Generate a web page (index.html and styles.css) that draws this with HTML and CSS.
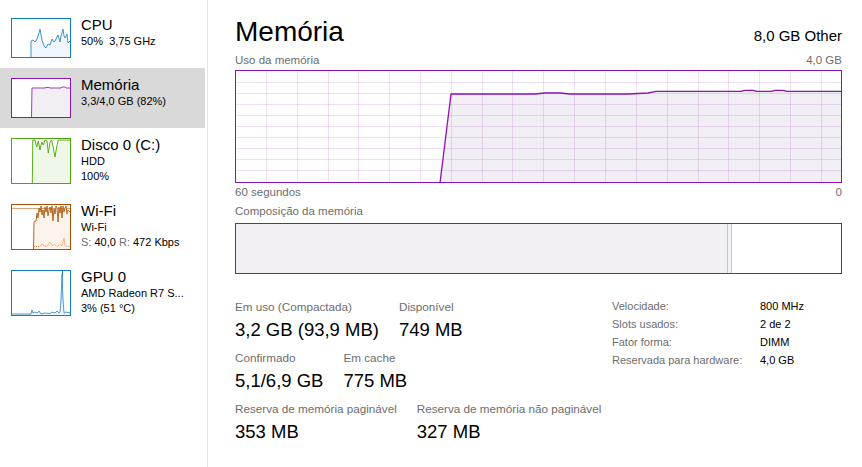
FILE: index.html
```html
<!DOCTYPE html>
<html lang="pt-BR"><head><meta charset="UTF-8">
<meta name="viewport" content="width=device-width, initial-scale=1">
<title>Gerenciador de Tarefas - Memória</title>
<link rel="stylesheet" href="styles.css"></head><body>

<div class="tm">
  <!-- lista de dispositivos -->
  <nav class="side">
    <div class="item">
      <svg class="thumb cpu" viewBox="12 19 58 38" preserveAspectRatio="none">
        <polygon class="fill" points="31,57 31,41 33,40 35,42 37,39 39,33 40,29 42,40 44,46 46,48 48,44 50,45 52,39 54,42 55,41 57,37 58,35 60,42 61,36 63,29 64,36 65,38 67,34 68,43 70,41 70,57"/>
        <polyline class="line" points="31,57 31,41 33,40 35,42 37,39 39,33 40,29 42,40 44,46 46,48 48,44 50,45 52,39 54,42 55,41 57,37 58,35 60,42 61,36 63,29 64,36 65,38 67,34 68,43 70,41"/>
      </svg>
      <div class="info"><div class="name">CPU</div><div class="sub">50%&nbsp; 3,75 GHz</div></div>
    </div>
    <div class="item active">
      <svg class="thumb mem" viewBox="12 79 58 38" preserveAspectRatio="none">
        <polygon class="fill" points="31.5,117 32,88 45,88 46,87.5 49,87.5 50,88 61,88 62,87 65,87 66,88 70,88 70,117"/>
        <polyline class="line" points="31.5,117 32,88 45,88 46,87.5 49,87.5 50,88 61,88 62,87 65,87 66,88 70,88"/>
      </svg>
      <div class="info"><div class="name">Memória</div><div class="sub">3,3/4,0 GB (82%)</div></div>
    </div>
    <div class="item tall">
      <svg class="thumb disk" viewBox="12 139 58 44" preserveAspectRatio="none">
        <polygon class="fill" points="32.3,183 32.8,140 35,140 36.7,147 38.3,141 40,150 41.7,142 43.3,145 45,140 47,141 48.3,153 50,142 51.7,140 53.3,148 55,157 56.7,147 58.3,140 70,140 70,183"/>
        <polyline class="line" points="32.3,183 32.8,140 35,140 36.7,147 38.3,141 40,150 41.7,142 43.3,145 45,140 47,141 48.3,153 50,142 51.7,140 53.3,148 55,157 56.7,147 58.3,140 70,140"/>
      </svg>
      <div class="info"><div class="name">Disco 0 (C:)</div><div class="sub">HDD</div><div class="sub">100%</div></div>
    </div>
    <div class="item tall">
      <svg class="thumb wifi" viewBox="12 205 58 44" preserveAspectRatio="none">
        <line class="scale" x1="12" y1="208.5" x2="70" y2="208.5"/>
        <polygon class="fill" points="33.5,249 34,222 36,221 37,213 38,218 39,208 40,212 41,206 42,215 43,210 44,218 45,207 46,212 47,206 48,216 49,210 50,207 51,213 52,206 53,221 54,209 55,214 56,206 57,208 58,222 59,207 60,213 61,206 62,218 63,206 64,212 65,208 66,206 67,214 68,210 70,212 70,249"/>
        <polyline class="line" points="33.5,249 34,222 36,221 37,213 38,218 39,208 40,212 41,206 42,215 43,210 44,218 45,207 46,212 47,206 48,216 49,210 50,207 51,213 52,206 53,221 54,209 55,214 56,206 57,208 58,222 59,207 60,213 61,206 62,218 63,206 64,212 65,208 66,206 67,214 68,210 70,212"/>
        <polyline class="send" points="34,246.5 40,246.5 42,243.5 44,246 47,246.5 50,242 52,246 54,244 57,246.5 60,244 62,246 64,238 65,246 70,246.5"/>
      </svg>
      <div class="info"><div class="name">Wi-Fi</div><div class="sub">Wi-Fi</div><div class="sub"><span class="dim">S:</span> 40,0 <span class="dim">R:</span> 472 Kbps</div></div>
    </div>
    <div class="item tall">
      <svg class="thumb gpu" viewBox="12 271 58 44" preserveAspectRatio="none">
        <line class="scale" x1="62.5" y1="271" x2="62.5" y2="315"/>
        <polygon class="fill" points="12,314 31,314 32,310 33,313 35,312 37,313 39,311 41,314 45,313 50,313.5 52,312 55,313 57,311 59,313 60,312 61,300 62,274 63,300 64,313 66,312 70,313 70,315 12,315"/>
        <polyline class="line" points="12,314 31,314 32,310 33,313 35,312 37,313 39,311 41,314 45,313 50,313.5 52,312 55,313 57,311 59,313 60,312 61,300 62,274 63,300 64,313 66,312 70,313"/>
      </svg>
      <div class="info"><div class="name">GPU 0</div><div class="sub">AMD Radeon R7 S...</div><div class="sub">3% (51 °C)</div></div>
    </div>
  </nav>

  <!-- painel de memória -->
  <main class="panel">
    <header class="head">
      <h1>Memória</h1>
      <div class="total">8,0 GB Other</div>
    </header>

    <div class="axis"><span>Uso da memória</span><span>4,0 GB</span></div>
    <svg class="graph" viewBox="0 0 605 111" preserveAspectRatio="none">
      <polygon class="area" points="204,112 215,23 299,23 309,22 324,22 334,23 392,23 412,22 420,20.3 505,20.3 509,19.3 517,19.3 521,20.3 535,20.3 539,19.3 547,19.3 551,20.3 605,20.3 605,112"/>
      <path class="grid" d="M30.5 0V111M61.5 0V111M92.5 0V111M122.5 0V111M153.5 0V111M184.5 0V111M215.5 0V111M246.5 0V111M276.5 0V111M307.5 0V111M338.5 0V111M369.5 0V111M400.5 0V111M431.5 0V111M462.5 0V111M492.5 0V111M523.5 0V111M554.5 0V111M585.5 0V111M0 11.5H605M0 22.5H605M0 33.5H605M0 44.5H605M0 55.5H605M0 66.5H605M0 77.5H605M0 88.5H605M0 99.5H605"/>
      <polyline class="usage" points="204,112 215,23 299,23 309,22 324,22 334,23 392,23 412,22 420,20.3 505,20.3 509,19.3 517,19.3 521,20.3 535,20.3 539,19.3 547,19.3 551,20.3 605,20.3"/>
    </svg>
    <div class="axis low"><span>60 segundos</span><span>0</span></div>

    <div class="axis comp-label"><span>Composição da memória</span></div>
    <div class="comp">
      <div class="used"></div>
      <div class="modified"></div>
    </div>

    <section class="stats">
      <div class="stats-left">
        <div class="row">
          <div class="stat"><div class="lbl">Em uso (Compactada)</div><div class="val">3,2 GB (93,9 MB)</div></div>
          <div class="stat"><div class="lbl">Disponível</div><div class="val">749 MB</div></div>
        </div>
        <div class="row">
          <div class="stat"><div class="lbl">Confirmado</div><div class="val">5,1/6,9 GB</div></div>
          <div class="stat"><div class="lbl">Em cache</div><div class="val">775 MB</div></div>
        </div>
        <div class="row">
          <div class="stat"><div class="lbl">Reserva de memória paginável</div><div class="val">353 MB</div></div>
          <div class="stat"><div class="lbl">Reserva de memória não paginável</div><div class="val">327 MB</div></div>
        </div>
      </div>
      <dl class="specs">
        <dt>Velocidade:</dt><dd>800 MHz</dd>
        <dt>Slots usados:</dt><dd>2 de 2</dd>
        <dt>Fator forma:</dt><dd>DIMM</dd>
        <dt>Reservada para hardware:</dt><dd>4,0 GB</dd>
      </dl>
    </section>
  </main>
</div>

</body></html>
```

FILE: styles.css
```css
/* ───── reset ───── */
*{box-sizing:border-box;margin:0;padding:0}
:root{--mem:#8b12ae;--mem-fill:#f2eff4;--gray:#6d6d6d}
body{font-family:"Liberation Sans",Arial,sans-serif;background:#fff;color:#000;
     width:862px;height:467px;overflow:hidden}
.tm{display:flex;height:467px}

/* ───── lista lateral ───── */
.side{width:208px;border-right:1px solid #e6e6e6;padding-top:8px;flex:none}
.item{display:flex;align-items:flex-start;gap:10px;height:60px;padding:10px 0 0 11px;margin-right:2px}
.item.tall{height:66px}
.item.active{background:#d9d9d9}
.thumb{width:60px;height:40px;border:1px solid;display:block;flex:none;background:#fff}
.item.tall .thumb{height:46px}
.thumb .line,.thumb .send{fill:none;stroke-width:1;stroke-linejoin:round}
.thumb.cpu{border-color:#117dbb}
.cpu .fill{fill:#f1f6fa}.cpu .line{stroke:#3f94c8}
.thumb.mem{border-color:var(--mem)}
.mem .fill{fill:var(--mem-fill)}.mem .line{stroke:#9b3dbb}
.thumb.disk{border-color:#4da60c}
.disk .fill{fill:#eff7e9}.disk .line{stroke:#5aae1c}
.thumb.wifi{border-color:#a74f01}
.wifi .fill{fill:#fcf3eb}.wifi .line{stroke:#b5661f}
.wifi .scale{stroke:#d7a57a;stroke-width:1}
.wifi .send{stroke:#e8833a;stroke-dasharray:1 1}
.thumb.gpu{border-color:#117dbb}
.gpu .fill{fill:#f1f6fa}.gpu .line{stroke:#4a9bcc}
.gpu .scale{stroke:#117dbb;stroke-width:1}
.info{margin-top:-3px;min-width:0}
.name{font-size:15px;line-height:19px}
.sub{font-size:11px;line-height:15px;white-space:nowrap}
.dim{color:var(--gray)}

/* ───── painel ───── */
.panel{flex:1;padding:15px 20px 0 27px;min-width:0}
.head{display:flex;justify-content:space-between;align-items:baseline}
.head h1{font-size:28px;line-height:34px;font-weight:400}
.total{font-size:15px}
.axis{display:flex;justify-content:space-between;font-size:11.5px;line-height:15px;color:var(--gray);margin-top:4px}
.axis.low{margin-top:2px}
.graph{display:block;width:607px;height:113px;border:1px solid var(--mem);margin-top:2px}
.graph .area{fill:var(--mem-fill)}
.graph .grid{stroke:rgba(139,18,174,.14);stroke-width:1;fill:none}
.graph .usage{fill:none;stroke:var(--mem);stroke-width:1.3;stroke-linejoin:round}
.comp{display:flex;height:51px;border:1px solid var(--mem);margin-top:4px}
.comp .used{width:492px;background:var(--mem-fill);border-right:1px solid #d6b8e2}
.comp .modified{width:4px;background:#f4eef7;border-right:1px solid #d6b8e2}

/* ───── números ───── */
.stats{display:flex;margin-top:25px}
.stats-left{width:377px;flex:none}
.row{display:flex;gap:20px;margin-bottom:9px}
.lbl{font-size:11.7px;line-height:15px;color:var(--gray);white-space:nowrap}
.val{font-size:18.5px;line-height:22px;margin-top:5px;white-space:nowrap}
.specs{display:grid;grid-template-columns:148px auto;font-size:11px;line-height:18px;margin-top:-2px;align-self:flex-start}
.specs dt{color:var(--gray)}
```
